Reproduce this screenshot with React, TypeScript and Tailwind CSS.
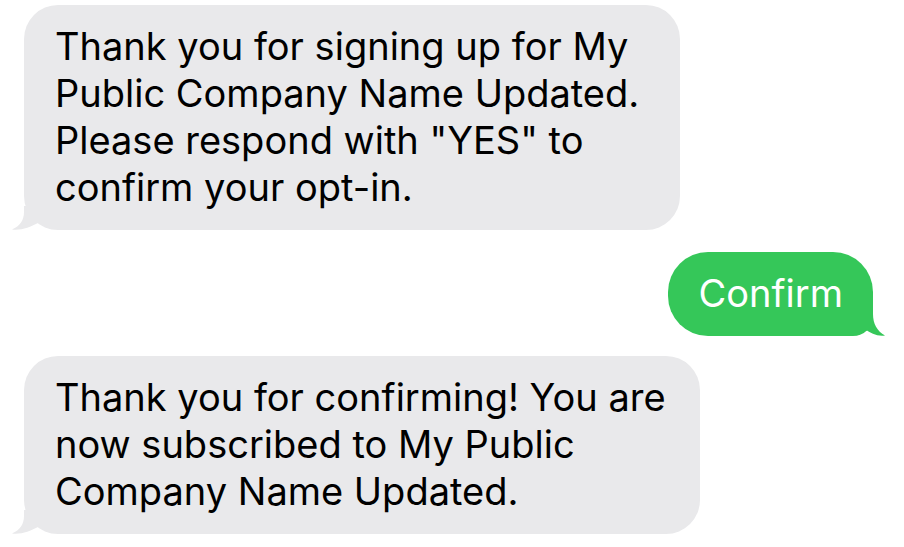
import React from 'react';

function GrayTail() {
  return (
    <svg
      className="absolute left-[-16px] bottom-0 w-[32px] h-[24px]"
      viewBox="0 0 32 24"
      aria-hidden
    >
      <path
        d="M16 0 L16 6 C16 14 12 20 4 23.5 C14 24.5 22 21 30 17 L30 0 Z"
        fill="#e9e9eb"
      />
    </svg>
  );
}

function GreenTail() {
  return (
    <svg
      className="absolute right-[-14px] bottom-0 w-[30px] h-[24px]"
      viewBox="0 0 30 24"
      aria-hidden
    >
      <path
        d="M16 0 L16 2 C16 12 20 19 28 23.5 C20 24.5 14 21.5 8 17 L0 17 L0 0 Z"
        fill="#35c759"
      />
    </svg>
  );
}

interface IncomingProps {
  lines: string[];
  width: string;
}

function Incoming({ lines, width }: IncomingProps) {
  return (
    <div
      className={`relative self-start bg-[#e9e9eb] rounded-[34px] pl-[31px] pr-4 pt-[18px] pb-[19px] ${width}`}
    >
      <p className="text-[38px] leading-[47px] text-black whitespace-nowrap">
        {lines.map((l, i) => (
          <span key={i} className="block">
            {l}
          </span>
        ))}
      </p>
      <GrayTail />
    </div>
  );
}

export default function App() {
  return (
    <div
      className="w-[904px] h-[547px] bg-white flex flex-col pt-[5px] pl-[24px] pr-[31px] overflow-hidden"
      style={{ fontFamily: 'Inter, "Liberation Sans", sans-serif' }}
    >
      <Incoming
        width="w-[656px]"
        lines={[
          'Thank you for signing up for My',
          'Public Company Name Updated.',
          'Please respond with "YES" to',
          'confirm your opt-in.',
        ]}
      />

      <div className="relative self-end mt-[22px] bg-[#35c759] rounded-[40px] rounded-br-[20px] pl-[31px] pr-[30px] pt-[18px] pb-[19px]">
        <p className="text-[38px] leading-[47px] text-white whitespace-nowrap">Confirm</p>
        <GreenTail />
      </div>

      <div className="mt-[20px] flex">
        <Incoming
          width="w-[676px]"
          lines={[
            'Thank you for confirming! You are',
            'now subscribed to My Public',
            'Company Name Updated.',
          ]}
        />
      </div>
    </div>
  );
}
